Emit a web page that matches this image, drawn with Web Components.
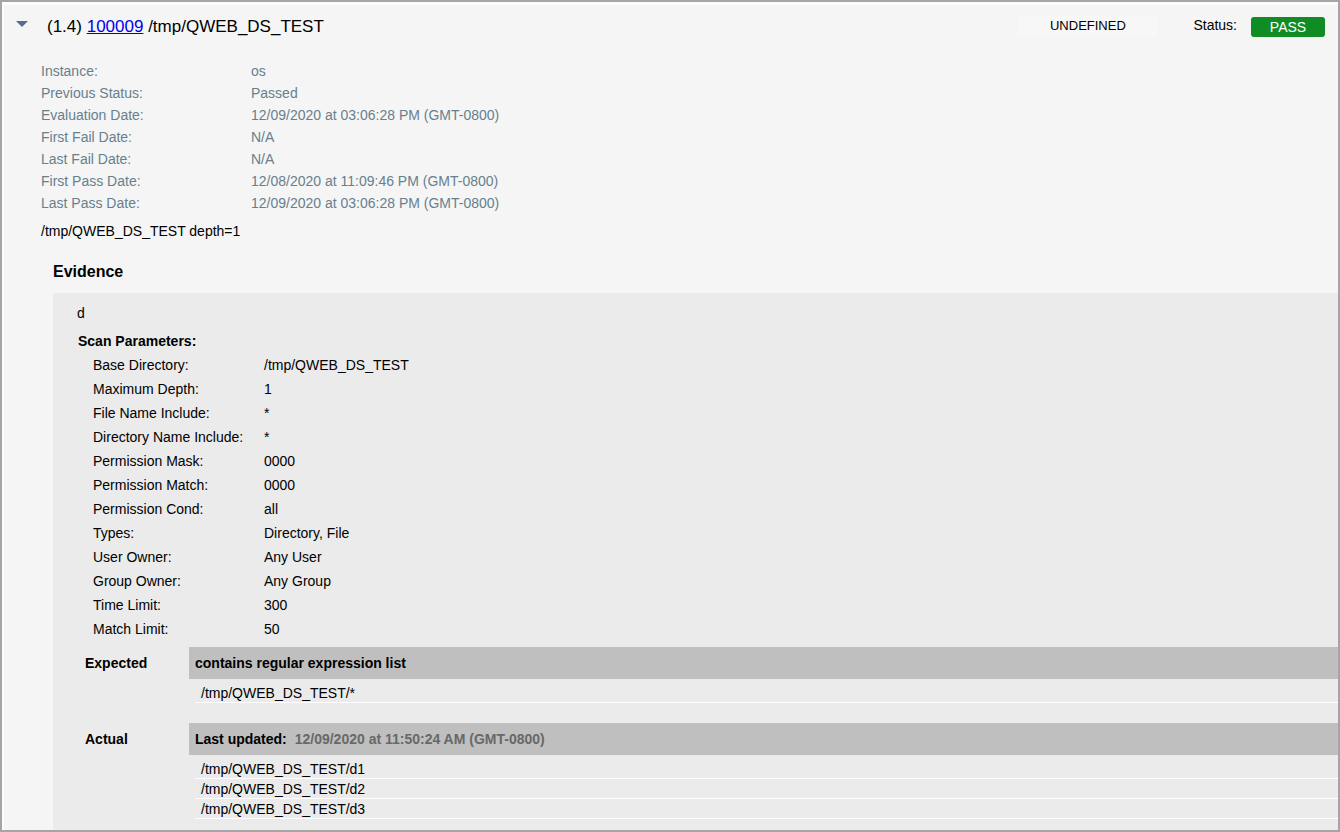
<!DOCTYPE html>
<html lang="en">
<head>
<meta charset="utf-8">
<meta name="viewport" content="width=device-width, initial-scale=1">
<title>Control result</title>
<style>
  body { margin: 0; font: 14px/20px "Liberation Sans", Arial, sans-serif; color: #000; }
</style>
</head>
<body>
<control-card>
  <control-header slot="header" href="#100009" control="100009" index="(1.4)" name="/tmp/QWEB_DS_TEST" severity="UNDEFINED" status="PASS"></control-header>
  <key-values slot="meta" kind="meta">
    <key-value label="Instance:">os</key-value>
    <key-value label="Previous Status:">Passed</key-value>
    <key-value label="Evaluation Date:">12/09/2020 at 03:06:28 PM (GMT-0800)</key-value>
    <key-value label="First Fail Date:">N/A</key-value>
    <key-value label="Last Fail Date:">N/A</key-value>
    <key-value label="First Pass Date:">12/08/2020 at 11:09:46 PM (GMT-0800)</key-value>
    <key-value label="Last Pass Date:">12/09/2020 at 03:06:28 PM (GMT-0800)</key-value>
  </key-values>
  <span slot="summary">/tmp/QWEB_DS_TEST depth=1</span>
  <evidence-panel>
    <span slot="title">Evidence</span>
    <span slot="type">d</span>
    <span slot="subtitle">Scan Parameters:</span>
    <key-values slot="params" kind="params">
      <key-value label="Base Directory:">/tmp/QWEB_DS_TEST</key-value>
      <key-value label="Maximum Depth:">1</key-value>
      <key-value label="File Name Include:">*</key-value>
      <key-value label="Directory Name Include:">*</key-value>
      <key-value label="Permission Mask:">0000</key-value>
      <key-value label="Permission Match:">0000</key-value>
      <key-value label="Permission Cond:">all</key-value>
      <key-value label="Types:">Directory, File</key-value>
      <key-value label="User Owner:">Any User</key-value>
      <key-value label="Group Owner:">Any Group</key-value>
      <key-value label="Time Limit:">300</key-value>
      <key-value label="Match Limit:">50</key-value>
    </key-values>
    <result-block label="Expected">
      <span slot="heading">contains regular expression list</span>
      <result-line>/tmp/QWEB_DS_TEST/*</result-line>
    </result-block>
    <result-block label="Actual">
      <span slot="heading">Last updated:</span>
      <span slot="stamp">12/09/2020 at 11:50:24 AM (GMT-0800)</span>
      <result-line>/tmp/QWEB_DS_TEST/d1</result-line>
      <result-line>/tmp/QWEB_DS_TEST/d2</result-line>
      <result-line>/tmp/QWEB_DS_TEST/d3</result-line>
    </result-block>
  </evidence-panel>
</control-card>

<script>
  class Base extends HTMLElement {
    constructor() {
      super();
      this.attachShadow({ mode: 'open' });
    }
    connectedCallback() {
      this.shadowRoot.innerHTML = this.render();
    }
    attr(name) { return this.getAttribute(name) || ''; }
  }

  customElements.define('control-card', class extends Base {
    render() {
      return `<style>
        :host { display: flex; flex-direction: column; box-sizing: border-box; min-height: 100vh;
          background: #f5f5f5; border: 2px solid #a5a5a5; box-shadow: inset 2px 3px #fcfcfc; }
        .meta { padding: 16px 0 0 39px; color: #67808d; }
        .summary { margin: 0; padding: 6px 0 0 39px; line-height: 22px; }
        .body { display: flex; flex: 1; }
        .body ::slotted(*) { flex: 1; }
      </style>
      <slot name="header"></slot>
      <div class="meta"><slot name="meta"></slot></div>
      <p class="summary"><slot name="summary"></slot></p>
      <div class="body"><slot></slot></div>`;
    }
  });

  customElements.define('control-header', class extends Base {
    render() {
      return `<style>
        :host { display: block; padding: 12px 13px 0 12px; }
        header { display: flex; align-items: flex-start; min-height: 30px; }
        button { width: 16px; height: 20px; margin: 0 17px 0 0; padding: 0; border: 0; background: none; cursor: pointer; }
        svg { display: block; margin: 0 auto; }
        h1 { flex: 1; margin: 0; font-size: 17px; line-height: 26px; font-weight: 400; }
        a { color: #0000ee; }
        .severity { width: 139px; background: #f7f7f7; text-align: center; font-size: 13px; margin: 2px 36px 0 0; }
        .label { margin: 1px 14px 0 0; }
        .status { width: 74px; height: 20px; margin-top: 3px; border-radius: 3px; background: #0f8c23; color: #fff; text-align: center; }
      </style>
      <header>
        <button type="button" aria-expanded="true" aria-label="Collapse"><svg width="12" height="20" viewBox="0 0 12 20"><path d="M0 7h12L6 13z" fill="#536e8f"/></svg></button>
        <h1>${this.attr('index')} <a href="${this.attr('href')}">${this.attr('control')}</a> ${this.attr('name')}</h1>
        <span class="severity">${this.attr('severity')}</span>
        <span class="label">Status:</span>
        <span class="status">${this.attr('status')}</span>
      </header>`;
    }
  });

  customElements.define('key-values', class extends Base {
    render() {
      return `<style>
        :host { display: block; --label: 210px; --row: 22px; }
        :host([kind="params"]) { --label: 171px; --row: 24px; }
      </style><slot></slot>`;
    }
  });

  customElements.define('key-value', class extends Base {
    render() {
      return `<style>
        :host { display: block; }
        dl { display: grid; grid-template-columns: var(--label) 1fr; margin: 0; line-height: var(--row); }
        dd { margin: 0; }
      </style><dl><dt>${this.attr('label')}</dt><dd><slot></slot></dd></dl>`;
    }
  });

  customElements.define('evidence-panel', class extends Base {
    render() {
      return `<style>
        :host { display: flex; flex-direction: column; padding-left: 51px; }
        h2 { margin: 18px 0 10px; font-size: 16px; line-height: 23px; }
        .panel { flex: 1; background: #ebebeb; padding: 10px 0; }
        p { margin: 0; padding-left: 24px; }
        h3 { margin: 6px 0 0; padding-left: 25px; font-size: 14px; line-height: 24px; }
        .params { padding: 0 0 6px 40px; }
        .blocks { display: flex; flex-direction: column; gap: 20px; }
      </style>
      <h2><slot name="title"></slot></h2>
      <div class="panel">
        <p><slot name="type"></slot></p>
        <h3><slot name="subtitle"></slot></h3>
        <div class="params"><slot name="params"></slot></div>
        <div class="blocks"><slot></slot></div>
      </div>`;
    }
  });

  customElements.define('result-block', class extends Base {
    render() {
      return `<style>
        :host { display: grid; grid-template-columns: 104px 1fr; padding-left: 32px; }
        h4, .heading { margin: 0; font-size: 14px; font-weight: 700; line-height: 32px; }
        .heading { background: #bfbfbf; padding-left: 6px; }
        ::slotted([slot="stamp"]) { color: #686868; margin-left: 4px; }
        .lines { padding: 4px 0 0 6px; }
      </style>
      <h4>${this.attr('label')}</h4>
      <div>
        <div class="heading"><slot name="heading"></slot> <slot name="stamp"></slot></div>
        <div class="lines" role="list"><slot></slot></div>
      </div>`;
    }
  });

  customElements.define('result-line', class extends Base {
    render() {
      this.setAttribute('role', 'listitem');
      return `<style>
        :host { display: block; padding: 1px 0 0 6px; line-height: 18px; border-bottom: 1px solid #fff; }
      </style><slot></slot>`;
    }
  });
</script>
</body>
</html>
